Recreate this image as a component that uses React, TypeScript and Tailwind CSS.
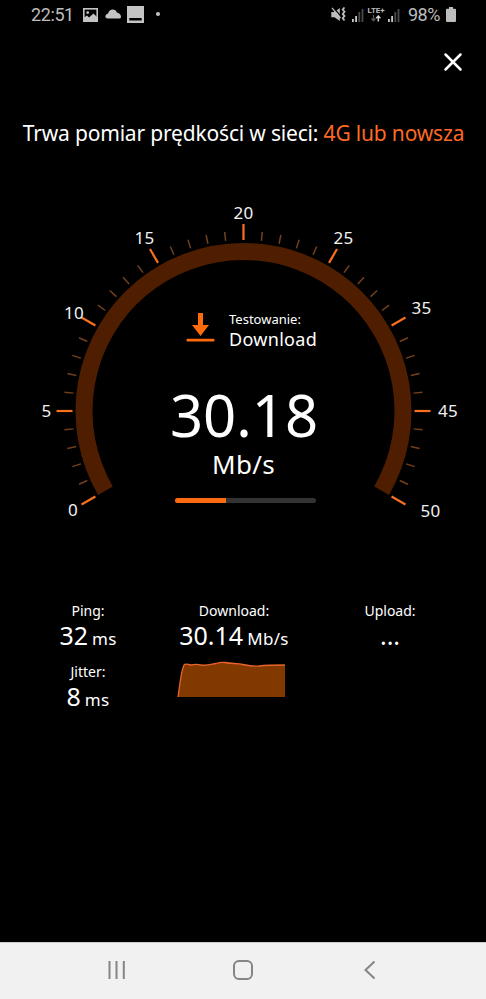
import { X } from "lucide-react";

const CX = 243.5;
const CY = 209;

const labels = [
  { text: "0", x: 73, y: 314 },
  { text: "5", x: 46.5, y: 215 },
  { text: "10", x: 74, y: 116.5 },
  { text: "15", x: 144.5, y: 41.5 },
  { text: "20", x: 243.5, y: 16.5 },
  { text: "25", x: 343.5, y: 41.5 },
  { text: "35", x: 421.5, y: 112 },
  { text: "45", x: 448, y: 215 },
  { text: "50", x: 430.5, y: 314.5 },
];

// 0 deg points straight up, the scale runs from -120 to 120
const ticks = Array.from({ length: 41 }, (_, i) => ({
  angle: -120 + i * 6,
  major: i % 5 === 0,
}));

function Signal({ bright }: { bright: number }) {
  return (
    <svg className="mb-[1px] h-[14px] w-[13px]" viewBox="0 0 13 14">
      {[3, 6, 10, 13].map((h, i) => (
        <rect key={h} x={i * 3.2} y={14 - h} width="1.8" height={h} fill={i < bright ? "#c8c8c8" : "#4a4a4a"} />
      ))}
    </svg>
  );
}

function StatusBar() {
  return (
    <div className="flex h-[30px] items-center pl-[31px] pr-[30px] font-['Roboto',sans-serif] text-[#bdbdbd]">
      <span className="w-[43px] text-[18px] leading-[30px] tracking-[-0.4px]">22:51</span>
      <svg className="mb-[1px] ml-[9px] h-[14px] w-[15px]" viewBox="0 0 15 14">
        <rect x="0.8" y="0.8" width="13.4" height="12.4" fill="none" stroke="#c4c4c4" strokeWidth="1.6" />
        <circle cx="4.7" cy="4.6" r="1.4" fill="#c4c4c4" />
        <path d="M1 12V9.5L4 7.5L6 9.5L10.5 5.5L14 9V13H1Z" fill="#c4c4c4" />
      </svg>
      <svg className="mb-[2px] ml-[7px] h-[10px] w-[17px]" viewBox="0 0 17 10">
        <path d="M2.5 9.5Q0 9 0.3 7Q0.8 5 3 4.5Q4.5 0.3 8 0.5Q11 0.7 12 3.5Q16 4.5 16 8Q16 9.5 14 9.5Z" fill="#c4c4c4" />
      </svg>
      <svg className="mb-[2px] ml-[5px] h-[17px] w-[17px]" viewBox="0 0 17 17">
        <rect width="17" height="17" fill="#c4c4c4" />
        <rect x="2.3" y="12" width="12.4" height="2.5" fill="#000" />
      </svg>
      <span className="mb-[2px] ml-[12px] h-[4px] w-[4px] rounded-full bg-[#c4c4c4]" />

      <div className="ml-auto flex items-center">
        <svg className="mb-[2px] h-[15px] w-[15px]" viewBox="0 0 15 15">
          <path d="M0.3 5H3.5L8.8 1V14L3.5 10.3H0.3Z" fill="#bdbdbd" />
          <path d="M2.2 0.5L10 9.5" stroke="#000" strokeWidth="1.2" />
          <path d="M1 0.8L9.5 11" stroke="#bdbdbd" strokeWidth="1.3" />
          <path d="M13.5 0.5L11.7 2.5L13.5 4.7L11.7 6.9L13.5 9.1L11.7 11.3L13.5 13.5" fill="none" stroke="#bdbdbd" strokeWidth="1.8" />
        </svg>
        <div className="ml-[6px]">
          <Signal bright={2} />
        </div>
        <div className="mb-[2px] ml-[2px] flex w-[18px] flex-col items-center">
          <span className="text-[8px] font-bold leading-[8px] tracking-[-0.1px]">LTE+</span>
          <svg className="h-[7px] w-[10px]" viewBox="0 0 10 7">
            <path d="M2.5 0V5M0.5 3.5L2.5 5.8L4.5 3.5" fill="none" stroke="#555" strokeWidth="1.3" />
            <path d="M7.3 6.5V1.5M5.2 3.2L7.3 1L9.4 3.2" fill="none" stroke="#d6d6d6" strokeWidth="1.4" />
          </svg>
        </div>
        <div className="ml-[3px]">
          <Signal bright={2} />
        </div>
        <span className="ml-[7px] w-[33px] text-[18px] leading-[30px] tracking-[-0.5px]">98%</span>
        <svg className="mb-[2px] ml-[5px] h-[15px] w-[10px]" viewBox="0 0 10 15">
          <path d="M3 0H7V1.8H9Q10 1.8 10 2.8V14Q10 15 9 15H1Q0 15 0 14V2.8Q0 1.8 1 1.8H3Z" fill="#bdbdbd" />
        </svg>
      </div>
    </div>
  );
}

function Gauge() {
  return (
    <div className="relative mt-[53px] h-[330px]">
      <svg className="h-[330px] w-[486px]" viewBox="0 0 486 330">
        <path
          d={`M${CX - 138.1} ${CY + 79.75}A159.5 159.5 0 1 1 ${CX + 138.1} ${CY + 79.75}`}
          fill="none"
          stroke="#4f1e00"
          strokeWidth="17"
        />
        {ticks.map((t) => (
          <line
            key={t.angle}
            x1={CX}
            x2={CX}
            y1={CY - 171}
            y2={CY - (t.major ? 187 : 180)}
            stroke={t.major ? "#f9701d" : "#74401c"}
            strokeWidth={t.major ? 2.2 : 1.5}
            transform={`rotate(${t.angle} ${CX} ${CY})`}
          />
        ))}
        {labels.map((l) => (
          <text key={l.text} x={l.x} y={l.y} textAnchor="middle" fontSize="17" letterSpacing="0.2" fill="#f2f2f2">
            {l.text}
          </text>
        ))}
      </svg>

      <div className="absolute inset-0 flex flex-col items-center pt-[108px] text-white">
        <div className="flex w-[132px] items-start pl-[9px]">
          <svg className="mt-[3px] h-[29px] w-[29px] shrink-0" viewBox="0 0 29 29">
            <path d="M12 0H17V12H23L14.5 23L6 12H12Z" fill="#ff6a0a" />
            <rect x="0.5" y="25.8" width="28" height="2.6" rx="1" fill="#ff6a0a" />
          </svg>
          <div className="ml-[14px] whitespace-nowrap">
            <p className="text-[13px] leading-[18px]">Testowanie:</p>
            <p className="text-[18px] leading-[23px] tracking-[0.3px]">Download</p>
          </div>
        </div>
        <p className="mt-[34px] pl-[2px] text-[58px] leading-[60px]">30.18</p>
        <p className="mt-[1px] pl-[1px] text-[26px] leading-[36px] tracking-[0.3px]">Mb/s</p>
        <div className="mt-[16px] ml-[5px] h-[5px] w-[141px] overflow-hidden rounded-full bg-[#333]">
          <div className="h-full w-[51px] bg-[#fa6a10]" />
        </div>
      </div>
    </div>
  );
}

function Stat({ label, value, unit }: { label: string; value: string; unit?: string }) {
  return (
    <div className="flex flex-col items-center whitespace-nowrap">
      <p className="text-[14px] leading-[19px]">{label}</p>
      <p className="flex items-baseline text-[25px] leading-[30px]">
        {value}
        {unit && <span className="ml-[4px] text-[17px] tracking-[0.3px]">{unit}</span>}
      </p>
    </div>
  );
}

function Results() {
  return (
    <div className="mt-[69px] flex h-[341px] items-start text-white">
      <div className="ml-[28px] flex w-[120px] flex-col gap-2">
        <Stat label="Ping:" value="32" unit="ms" />
        <Stat label="Jitter:" value="8" unit="ms" />
      </div>
      <div className="ml-[26px] w-[120px]">
        <Stat label="Download:" value="30.14" unit="Mb/s" />
        <svg className="ml-[3px] mt-[6px] h-[38px] w-[109px]" viewBox="0 0 109 38">
          <path d="M1 37C3 24 4 11 7 5C9 3 11 5 14 5C18 4 20 4 24 5C30 6 35 4 39 3.5C43 2 44 2 48 2.5C55 4 60 3 66 4.5C73 6 77 6.5 82 6C90 5 100 5 108 5V37Z" fill="#823900" />
          <path d="M1 37C3 24 4 11 7 5C9 3 11 5 14 5C18 4 20 4 24 5C30 6 35 4 39 3.5C43 2 44 2 48 2.5C55 4 60 3 66 4.5C73 6 77 6.5 82 6C90 5 100 5 108 5" fill="none" stroke="#e8642a" strokeWidth="1.3" />
        </svg>
      </div>
      <div className="ml-[36px] w-[120px]">
        <Stat label="Upload:" value="..." />
      </div>
    </div>
  );
}

function NavBar() {
  return (
    <div className="flex h-[57px] items-center justify-between border-t border-[#ccc] bg-[#f1f1f1] pb-[2px] pl-[107px] pr-[110px]">
      <svg className="h-[20px] w-[20px]" viewBox="0 0 20 20" fill="none" stroke="#858585" strokeWidth="2">
        <path d="M2.5 1V19M9.5 1V19M16.8 1V19" />
      </svg>
      <svg className="mr-[3px] h-[20px] w-[20px]" viewBox="0 0 20 20" fill="none" stroke="#858585" strokeWidth="2">
        <rect x="1" y="1" width="18" height="18" rx="5" />
      </svg>
      <svg className="h-[20px] w-[14px]" viewBox="0 0 14 20" fill="none" stroke="#858585" strokeWidth="2">
        <path d="M12.5 1.5L3.5 10L12.5 18.5" />
      </svg>
    </div>
  );
}

export default function App() {
  return (
    <div className="flex h-[999px] w-[486px] flex-col overflow-hidden bg-black font-['Noto_Sans',sans-serif]">
      <StatusBar />
      <div className="flex h-[64px] items-center justify-end pr-[18px]">
        <X className="h-[30px] w-[30px] text-white" strokeWidth={2} />
      </div>
      <h1 className="mt-[24px] h-[31px] whitespace-nowrap pl-[1px] text-center text-[21px] leading-[31px] tracking-[-0.18px] text-white">
        Trwa pomiar prędkości w sieci: <span className="text-[#fa6a24]">4G lub nowsza</span>
      </h1>
      <Gauge />
      <Results />
      <NavBar />
    </div>
  );
}
